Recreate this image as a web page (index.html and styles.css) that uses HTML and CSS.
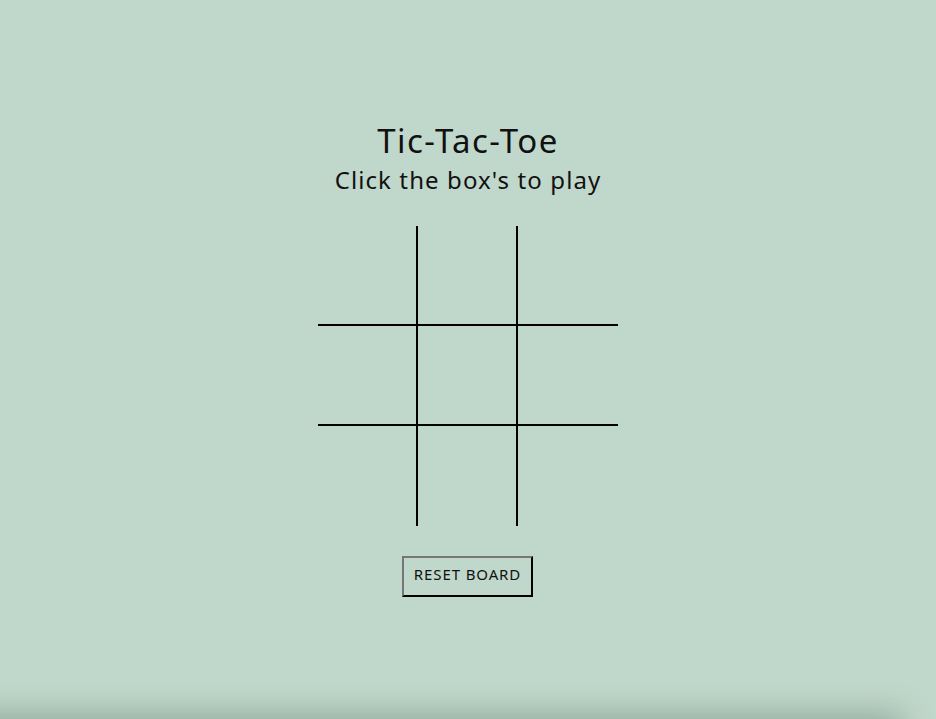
FILE: index.html
```html
<!DOCTYPE html>
<html>
<head>
<meta charset="utf-8">
<link rel="stylesheet" href="styles.css">
</head>
<body>
<main class="game">
  <h1 class="title">Tic-Tac-Toe</h1>
  <p class="subtitle">Click the box's to play</p>
  <div class="board">
    <div class="cell"></div><div class="cell"></div><div class="cell"></div>
    <div class="cell"></div><div class="cell"></div><div class="cell"></div>
    <div class="cell"></div><div class="cell"></div><div class="cell"></div>
  </div>
  <button class="reset">RESET BOARD</button>
</main>
<div class="shade"></div>
</body>
</html>
```
FILE: styles.css
```css
html, body {
  margin: 0;
  padding: 0;
  height: 100%;
  overflow: hidden;
}
body {
  background: #c0d8cb;
  font-family: "Noto Sans", "DejaVu Sans", sans-serif;
  color: #111;
}
.game {
  display: flex;
  flex-direction: column;
  align-items: center;
  padding-top: 119px;
}
.title {
  margin: 0;
  font-size: 33px;
  font-weight: 400;
  line-height: 44px;
  letter-spacing: 1.4px;
}
.subtitle {
  margin: 0;
  font-size: 24px;
  line-height: 34px;
  letter-spacing: 1.1px;
}
.board {
  margin-top: 29px;
  display: grid;
  grid-template-columns: repeat(3, 100px);
  grid-template-rows: repeat(3, 100px);
}
.cell {
  box-sizing: border-box;
}
.cell:nth-child(3n+1), .cell:nth-child(3n+2) {
  border-right: 2px solid #000;
}
.cell:nth-child(-n+6) {
  border-bottom: 2px solid #000;
}
.reset {
  margin-top: 30px;
  margin-right: 1px;
  width: 131px;
  height: 41px;
  background: transparent;
  border: 2px outset #767676;
  border-color: #767676 #222 #222 #767676;
  font-family: "Noto Sans", "DejaVu Sans", sans-serif;
  font-size: 15px;
  letter-spacing: 0.9px;
  color: #111;
  padding: 0 0 5px 0;
}
.shade {
  position: fixed;
  left: -60px;
  right: 40px;
  top: 719px;
  height: 40px;
  box-shadow: 0 0 30px 6px rgba(60, 90, 75, 0.35);
}
```
